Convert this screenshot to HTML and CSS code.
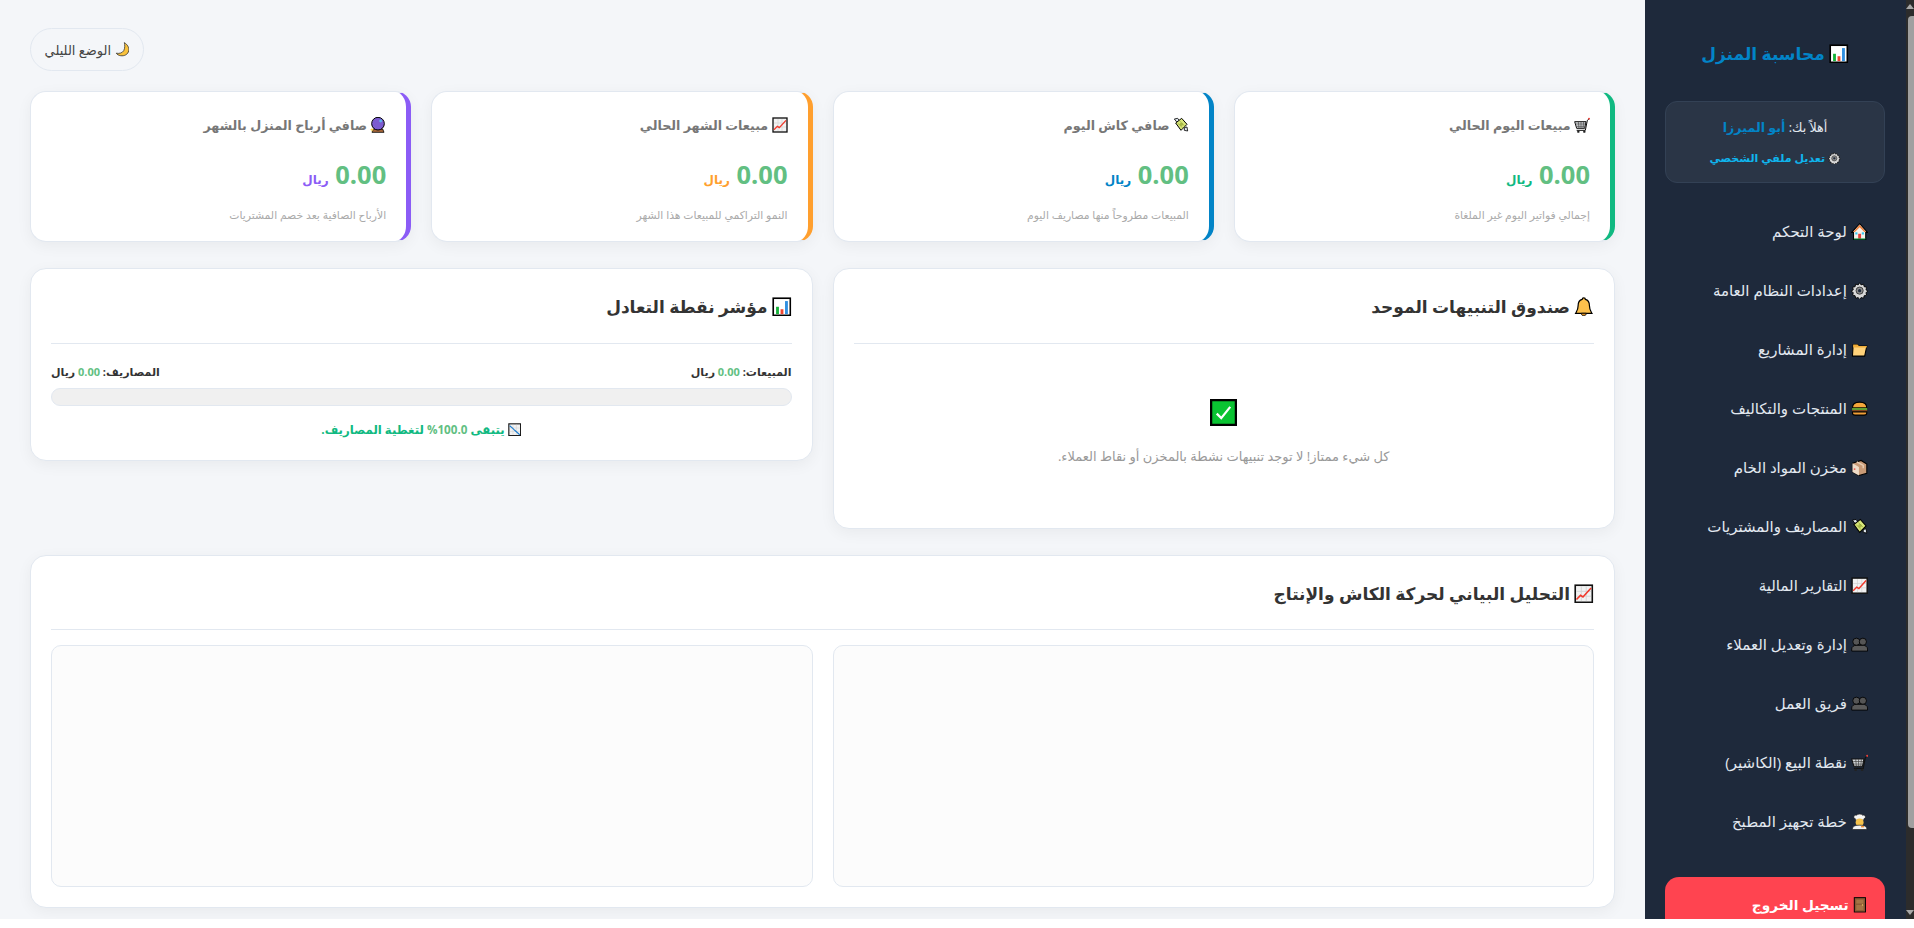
FILE: index.html
```html
<!DOCTYPE html>
<html lang="ar" dir="rtl">
<head>
    <meta charset="UTF-8">
    <meta name="viewport" content="width=device-width, initial-scale=1.0">
    <title>محاسبة المنزل</title>
    <link rel="stylesheet" href="styles.css">
</head>
<body>
    <!-- Emoji style icons -->
    <svg class="icon-defs" aria-hidden="true">
        <symbol id="i-chart" viewBox="0 0 24 24"><rect x="1.5" y="1.5" width="21" height="21" fill="#fff" stroke="#000" stroke-width="2"/><rect x="5" y="12" width="3.5" height="9" fill="#16b33a"/><rect x="10.5" y="15" width="3.5" height="6" fill="#f0452f"/><rect x="16" y="5" width="3.5" height="16" fill="#2f8fe0"/></symbol>
        <symbol id="i-up" viewBox="0 0 24 24"><rect x="1.5" y="1.5" width="21" height="21" fill="#f2f2f2" stroke="#111" stroke-width="2"/><path d="M3 9h18M3 15h18M9 3v18M15 3v18" stroke="#d2d2d2"/><path d="M3 19l5-5 3 2 10-11" fill="none" stroke="#f0392b" stroke-width="2"/></symbol>
        <symbol id="i-down" viewBox="0 0 24 24"><rect x="1.5" y="1.5" width="21" height="21" fill="#f2f2f2" stroke="#111" stroke-width="2"/><path d="M3 9h18M3 15h18M9 3v18M15 3v18" stroke="#d2d2d2"/><path d="M3 5l6 5 3 3 9 8" fill="none" stroke="#1f7fd0" stroke-width="2"/></symbol>
        <symbol id="i-home" viewBox="0 0 24 24"><path d="M12 1L23 13h-2.500v10h-17V13H1z" fill="#f6f1ea" stroke="#000" stroke-width="1.500"/><path d="M12 2.500L21 12.500h-2.500L12 6l-6.500 6.500H3z" fill="#f0803c"/><rect x="10" y="15" width="4" height="7" fill="#e8413a"/><rect x="6" y="13" width="3" height="3" fill="#35c7f0"/><rect x="15" y="13" width="3" height="3" fill="#35c7f0"/><rect x="4" y="21.500" width="16" height="1.500" fill="#0a8f3c"/></symbol>
        <symbol id="i-gear" viewBox="0 0 24 24"><path d="M12 1l2 3 3.500-1 .8 3.500 3.500.8-1 3.500 3 2-3 2 1 3.500-3.500.8-.8 3.500-3.500-1-2 3-2-3-3.500 1-.8-3.500-3.500-.8 1-3.500-3-2 3-2-1-3.500 3.500-.8.8-3.500 3.500 1z" fill="#d8d8d8" stroke="#000" stroke-width="1.200"/><circle cx="12" cy="12" r="5" fill="#8a8a8a" stroke="#222"/><circle cx="12" cy="12" r="2.200" fill="#1e293b"/></symbol>
        <symbol id="i-folder" viewBox="0 0 24 24"><path d="M3 5h6l2 2h11l-3 14H2z" fill="#ffd27a" stroke="#000" stroke-width="1.500"/><path d="M3 5h6l2 2h11v2H3z" fill="#f0ad3a"/></symbol>
        <symbol id="i-burger" viewBox="0 0 24 24"><path d="M2 11C2 5 7 3 12 3s10 2 10 8z" fill="#f5a63b" stroke="#000" stroke-width="1.500"/><rect x="1.500" y="11" width="21" height="3" fill="#5f9e31"/><rect x="1.500" y="14" width="21" height="2.500" fill="#8a4a20"/><path d="M2 16.500h20V18c0 2-2 3-4 3H6c-2 0-4-1-4-3z" fill="#f2a038" stroke="#000" stroke-width="1.500"/></symbol>
        <symbol id="i-box" viewBox="0 0 24 24"><path d="M2 6l12-4 8 5v13l-11 3-9-5z" fill="#c99a76" stroke="#000" stroke-width="1.500"/><path d="M2 6l9 5v12l-9-5z" fill="#efdcc8"/><path d="M8 4l9 5v4" fill="none" stroke="#e7cdb4" stroke-width="2"/><circle cx="5" cy="14" r="1.300" fill="#e8554e"/></symbol>
        <symbol id="i-money" viewBox="0 0 24 24"><path d="M2 3l5-1 3 4-4 2zM17 16l4-1 1 6-5-1z" fill="#dfe7ee" stroke="#000" stroke-width="1.200"/><path d="M4 9L13 2l8 9-9 9z" fill="#d9e77a" stroke="#000" stroke-width="1.500"/><circle cx="12.500" cy="11" r="2.500" fill="#a8b947"/><path d="M7 9l8 8M10 6l8 8" stroke="#8fa136"/></symbol>
        <symbol id="i-team" viewBox="0 0 24 24"><circle cx="7.500" cy="8" r="5" fill="#555" stroke="#000" stroke-width="1.200"/><circle cx="16.500" cy="8" r="5" fill="#555" stroke="#000" stroke-width="1.200"/><path d="M1 21v-3c0-3 3-5 6-5h10c3 0 6 2 6 5v3z" fill="#5a5a5a" stroke="#000" stroke-width="1.200"/></symbol>
        <symbol id="i-cart" viewBox="0 0 24 24"><path d="M1 7h17l-2 10H4z" fill="#d4d7da" stroke="#111" stroke-width="1.500"/><path d="M3 10.500h14M4 14h12M6.500 7l1 10M10.500 7v10M14.500 7l-1 10" stroke="#444"/><path d="M4 20h13l3-15 2.500-2" fill="none" stroke="#111" stroke-width="1.500"/><circle cx="22.500" cy="2.500" r="1.500" fill="#e8413a"/><circle cx="6.500" cy="22" r="1.800" fill="#222"/><circle cx="15.500" cy="22" r="1.800" fill="#222"/></symbol>
        <symbol id="i-cook" viewBox="0 0 24 24"><path d="M6 8C3 8 3 2 8 3c1-2 7-2 8 0 5-1 5 5 2 5v2H6z" fill="#f4f4f4" stroke="#222"/><circle cx="12" cy="13" r="5.500" fill="#f6c24a"/><path d="M2 23c0-5 4-6 10-6s10 1 10 6z" fill="#f2f2f2" stroke="#222"/><rect x="14" y="18" width="4" height="2" fill="#f08a2c"/></symbol>
        <symbol id="i-door" viewBox="0 0 24 24"><rect x="3.500" y="1" width="17" height="22" fill="#8b5a34" stroke="#000" stroke-width="1.500"/><rect x="6.500" y="4" width="11" height="6" fill="#a67444"/><rect x="6.500" y="12" width="11" height="8" fill="#a67444"/><circle cx="16" cy="12" r="1" fill="#f5d36a"/></symbol>
        <symbol id="i-moon" viewBox="0 0 24 24"><path d="M15 1c5 3 8 8 7 13-1 6-7 9-13 8-3-.5-6-2-7-4 5 1 10-.5 12-4 2-4 2-9 1-13z" fill="#f9c23c" stroke="#2a2a2a" stroke-width="1.200"/></symbol>
        <symbol id="i-ball" viewBox="0 0 24 24"><path d="M5 18h14l2 5H3z" fill="#a9683a" stroke="#000" stroke-width="1.200"/><circle cx="12" cy="10" r="9.500" fill="#7c5cd0" stroke="#000" stroke-width="1.500"/><circle cx="16" cy="6" r="2.200" fill="#5fb4f0"/><path d="M3 16l1 2 2 1-2 1-1 2-1-2-2-1 2-1z" fill="#ffd84a"/></symbol>
        <symbol id="i-bell" viewBox="0 0 24 24"><path d="M12 1c1.500 0 2 1 2 2 4 1 5 4 5 8 0 5 2 7 3 9H2c1-2 3-4 3-9 0-4 1-7 5-8 0-1 .5-2 2-2z" fill="#fcc04c" stroke="#000" stroke-width="1.500"/><path d="M9 20c0 2 1 3 3 3s3-1 3-3z" fill="#d88a1e" stroke="#000"/></symbol>
        <symbol id="i-check" viewBox="0 0 24 24"><rect x="1" y="1" width="22" height="22" fill="#0ac332" stroke="#000" stroke-width="2"/><path d="M6 13l4 4 8-10" fill="none" stroke="#fff" stroke-width="2"/></symbol>
    </svg>

    <div class="app">
        <div class="scroll-track">
            <div class="scroll-arrow"></div>
            <div class="scroll-thumb"></div>
            <div class="scroll-arrow down"></div>
        </div>

        <!-- Sidebar -->
        <aside class="sidebar">
            <h2 class="brand"><svg class="ico"><use href="#i-chart"/></svg> محاسبة المنزل</h2>
            <div class="user-box">
                <div class="welcome">أهلاً بك: <strong>أبو الميرزا</strong></div>
                <a class="profile-link" href="#"><svg class="ico"><use href="#i-gear"/></svg> تعديل ملفي الشخصي</a>
            </div>
            <nav class="menu">
                <a href="#"><svg class="ico"><use href="#i-home"/></svg> لوحة التحكم</a>
                <a href="#"><svg class="ico"><use href="#i-gear"/></svg> إعدادات النظام العامة</a>
                <a href="#"><svg class="ico"><use href="#i-folder"/></svg> إدارة المشاريع</a>
                <a href="#"><svg class="ico"><use href="#i-burger"/></svg> المنتجات والتكاليف</a>
                <a href="#"><svg class="ico"><use href="#i-box"/></svg> مخزن المواد الخام</a>
                <a href="#"><svg class="ico"><use href="#i-money"/></svg> المصاريف والمشتريات</a>
                <a href="#"><svg class="ico"><use href="#i-up"/></svg> التقارير المالية</a>
                <a href="#"><svg class="ico"><use href="#i-team"/></svg> إدارة وتعديل العملاء</a>
                <a href="#"><svg class="ico"><use href="#i-team"/></svg> فريق العمل</a>
                <a href="#"><svg class="ico"><use href="#i-cart"/></svg> نقطة البيع (الكاشير)</a>
                <a href="#"><svg class="ico"><use href="#i-cook"/></svg> خطة تجهيز المطبخ</a>
            </nav>
            <a class="logout" href="#"><svg class="ico"><use href="#i-door"/></svg> تسجيل الخروج</a>
        </aside>

        <!-- Main content -->
        <main class="content">
            <div class="toolbar">
                <button class="theme-btn"><svg class="ico"><use href="#i-moon"/></svg> الوضع الليلي</button>
            </div>

            <div class="stats">
                <div class="stat green">
                    <div class="stat-title"><svg class="ico"><use href="#i-cart"/></svg> مبيعات اليوم الحالي</div>
                    <div class="stat-value">0.00 <span>ريال</span></div>
                    <div class="stat-note">إجمالي فواتير اليوم غير الملغاة</div>
                </div>
                <div class="stat blue">
                    <div class="stat-title"><svg class="ico"><use href="#i-money"/></svg> صافي كاش اليوم</div>
                    <div class="stat-value">0.00 <span>ريال</span></div>
                    <div class="stat-note">المبيعات مطروحاً منها مصاريف اليوم</div>
                </div>
                <div class="stat orange">
                    <div class="stat-title"><svg class="ico"><use href="#i-up"/></svg> مبيعات الشهر الحالي</div>
                    <div class="stat-value">0.00 <span>ريال</span></div>
                    <div class="stat-note">النمو التراكمي للمبيعات هذا الشهر</div>
                </div>
                <div class="stat purple">
                    <div class="stat-title"><svg class="ico"><use href="#i-ball"/></svg> صافي أرباح المنزل بالشهر</div>
                    <div class="stat-value">0.00 <span>ريال</span></div>
                    <div class="stat-note">الأرباح الصافية بعد خصم المشتريات</div>
                </div>
            </div>

            <div class="two-cols">
                <section class="panel">
                    <h3 class="panel-title"><svg class="ico"><use href="#i-bell"/></svg> صندوق التنبيهات الموحد</h3>
                    <div class="empty">
                        <svg class="empty-ico"><use href="#i-check"/></svg>
                        <p>كل شيء ممتاز! لا توجد تنبيهات نشطة بالمخزن أو نقاط العملاء.</p>
                    </div>
                </section>
                <section class="panel">
                    <h3 class="panel-title"><svg class="ico"><use href="#i-chart"/></svg> مؤشر نقطة التعادل</h3>
                    <div class="be-labels">
                        <span>المبيعات: <em>0.00</em> ريال</span>
                        <span>المصاريف: <em>0.00</em> ريال</span>
                    </div>
                    <div class="be-bar"></div>
                    <div class="be-status"><svg class="ico"><use href="#i-down"/></svg> يتبقى <em>100.0%</em> لتغطية المصاريف.</div>
                </section>
            </div>

            <section class="panel wide">
                <h3 class="panel-title"><svg class="ico"><use href="#i-up"/></svg> التحليل البياني لحركة الكاش والإنتاج</h3>
                <div class="charts">
                    <div class="chart-box"></div>
                    <div class="chart-box"></div>
                </div>
            </section>
        </main>
    </div>
</body>
</html>
```

FILE: styles.css
```css
* {
    box-sizing: border-box;
}
html, body {
    margin: 0;
    padding: 0;
    background-color: #fff;
}
body {
    font-family: "Open Sans", "DejaVu Sans", sans-serif;
    color: #333;
}
a {
    text-decoration: none;
}
.icon-defs {
    display: none;
}
.ico {
    width: 1.15em;
    height: 1.15em;
    vertical-align: -0.2em;
}
.app {
    display: flex;
    height: 919px;
    overflow: hidden;
    background-color: #f4f6f9;
}

/* Drawn scrollbar of the sidebar */
.scroll-track {
    display: flex;
    flex-direction: column;
    flex: 0 0 8px;
    background-color: #2c2c2c;
}
.scroll-arrow {
    height: 16px;
    padding-top: 4px;
}
.scroll-arrow::before {
    content: "";
    display: block;
    width: 0;
    margin: 0 auto;
    border-left: 4px solid transparent;
    border-right: 4px solid transparent;
    border-bottom: 5px solid #a8a8a8;
}
.scroll-arrow.down {
    height: 9px;
    margin-top: auto;
    padding-top: 0;
}
.scroll-arrow.down::before {
    border-bottom: 0;
    border-top: 5px solid #a8a8a8;
}
.scroll-thumb {
    height: 812px;
    margin-left: 2px;
    background-color: #a0a0a0;
    border-radius: 4px 0 0 4px;
}

/* Sidebar */
.sidebar {
    flex: 0 0 261px;
    padding: 0 21px 0 20px;
    background-color: #1e293b;
    color: #e2e8f0;
    overflow: hidden;
}
.brand {
    margin: 41px 0 0;
    font-size: 17px;
    font-weight: 700;
    line-height: 26px;
    text-align: center;
    color: #0284c7;
}
.user-box {
    margin-top: 34px;
    height: 82px;
    padding-top: 15px;
    text-align: center;
    background-color: #2a3546;
    border: 1px solid #334155;
    border-radius: 12px;
}
.welcome {
    font-size: 12.7px;
    line-height: 20px;
}
.welcome strong {
    color: #0284c7;
}
.profile-link {
    display: block;
    margin-top: 11px;
    font-size: 11px;
    font-weight: 700;
    line-height: 20px;
    color: #0fb5ee;
}
.menu {
    margin-top: 19px;
}
.menu a {
    display: block;
    height: 59px;
    padding: 0 17px;
    font-size: 15px;
    line-height: 59px;
    color: #e2e8f0;
}
.logout {
    display: block;
    margin-top: 26px;
    height: 56px;
    padding: 0 17px;
    font-size: 13.7px;
    font-weight: 700;
    line-height: 56px;
    color: #fff;
    background-color: #ff4450;
    border-radius: 14px;
}

/* Main content */
.content {
    flex: 1;
    min-width: 0;
    padding: 28px 30px 0;
}
.toolbar {
    display: flex;
    justify-content: flex-end;
    margin-bottom: 20px;
}
.theme-btn {
    width: 114px;
    height: 43px;
    padding: 0;
    font-family: inherit;
    font-size: 13px;
    color: #444;
    background-color: #f4f6f9;
    border: 1px solid #e2e8f0;
    border-radius: 22px;
}
.stats {
    display: grid;
    grid-template-columns: repeat(4, 1fr);
    gap: 20px;
    margin-bottom: 26px;
}
.stat {
    height: 151px;
    padding: 22px 20px 0;
    background-color: #fff;
    border: 1px solid #e2e8f0;
    border-right-width: 5px;
    border-radius: 16px;
    box-shadow: 0 4px 15px rgba(0, 0, 0, 0.05);
}
.stat.green { border-right-color: #10b981; }
.stat.blue { border-right-color: #0284c7; }
.stat.orange { border-right-color: #ff9f2e; }
.stat.purple { border-right-color: #8b5cf6; }
.stat-title {
    font-size: 12.7px;
    font-weight: 700;
    line-height: 22px;
    color: #777;
}
.stat-title .ico {
    width: 16px;
    height: 16px;
}
.stat-value {
    margin-top: 20px;
    font-size: 25.5px;
    font-weight: 700;
    line-height: 36px;
    color: #62bf82;
}
.stat-value span {
    font-size: 12px;
}
.stat.green span { color: #10b981; }
.stat.blue span { color: #0284c7; }
.stat.orange span { color: #ff9f2e; }
.stat.purple span { color: #8b5cf6; }
.stat-note {
    margin-top: 8px;
    font-size: 10.8px;
    line-height: 18px;
    color: #aaa;
}
.two-cols {
    display: grid;
    grid-template-columns: 1fr 1fr;
    gap: 20px;
    align-items: start;
    margin-bottom: 26px;
}
.panel {
    padding: 20px;
    background-color: #fff;
    border: 1px solid #e2e8f0;
    border-radius: 16px;
    box-shadow: 0 4px 15px rgba(0, 0, 0, 0.05);
}
.panel-title {
    margin: 0;
    height: 55px;
    font-size: 17px;
    font-weight: 700;
    line-height: 36px;
    color: #333;
    border-bottom: 1px solid #e2e8f0;
}
.wide .panel-title {
    height: 54px;
}
.empty {
    height: 164px;
    padding-top: 55px;
    text-align: center;
    color: #999;
}
.empty-ico {
    display: block;
    width: 27px;
    height: 27px;
    margin: 0 auto;
}
.empty p {
    margin: 19px 0 0;
    font-size: 13px;
    line-height: 22px;
}
.be-labels {
    display: flex;
    justify-content: space-between;
    margin-top: 18px;
    font-size: 11px;
    font-weight: 700;
    line-height: 20px;
}
.be-labels em, .be-status em {
    font-style: normal;
    color: #62bf82;
}
.be-bar {
    height: 18px;
    margin-top: 6px;
    background-color: #f0f0f0;
    border: 1px solid #e2e8f0;
    border-radius: 9px;
}
.be-status {
    margin-top: 12px;
    font-size: 11.7px;
    font-weight: 700;
    line-height: 22px;
    text-align: center;
    color: #10b981;
}
.charts {
    display: grid;
    grid-template-columns: 1fr 1fr;
    gap: 20px;
    margin-top: 15px;
}
.chart-box {
    height: 242px;
    background-color: #fcfcfc;
    border: 1px solid #e2e8f0;
    border-radius: 10px;
}
```
